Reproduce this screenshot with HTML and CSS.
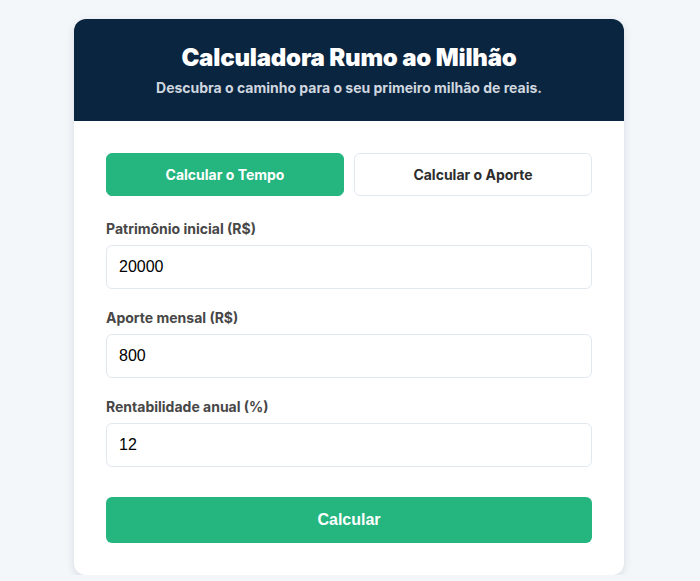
FILE: index.html
```html
<!DOCTYPE html>
<html lang="pt-BR">
<head>
<meta charset="utf-8">
<title>Calculadora Rumo ao Milhão</title>
<link rel="stylesheet" href="styles.css">
</head>
<body>
<div class="card">
  <header class="card-header">
    <h1 class="title">Calculadora Rumo ao Milhão</h1>
    <p class="subtitle">Descubra o caminho para o seu primeiro milhão de reais.</p>
  </header>
  <div class="card-body">
    <div class="tabs">
      <button class="tab tab-active">Calcular o Tempo</button>
      <button class="tab">Calcular o Aporte</button>
    </div>
    <div class="field">
      <label class="label">Patrimônio inicial (R$)</label>
      <input class="input" type="text" value="20000">
    </div>
    <div class="field">
      <label class="label">Aporte mensal (R$)</label>
      <input class="input" type="text" value="800">
    </div>
    <div class="field">
      <label class="label">Rentabilidade anual (%)</label>
      <input class="input" type="text" value="12">
    </div>
    <button class="submit">Calcular</button>
  </div>
</div>
</body>
</html>
```

FILE: styles.css
```css
* { box-sizing: border-box; }
html, body { margin: 0; padding: 0; }
body {
  background: #f4f7fa;
  font-family: Inter, "Noto Sans", sans-serif;
  padding: 19px 2px 0 0;
}
.card {
  width: 550px;
  margin: 0 auto;
  background: #ffffff;
  border-radius: 12px;
  overflow: hidden;
  box-shadow: 0 3px 10px rgba(15, 30, 60, 0.12);
}
.card-header {
  background: #0a2540;
  height: 102px;
  text-align: center;
  padding-top: 24px;
}
.title {
  margin: 0;
  color: #ffffff;
  font-size: 24px;
  font-weight: 900;
  line-height: 29px;
  letter-spacing: -0.2px;
}
.subtitle {
  margin: 7px 0 0;
  color: #cfd6df;
  font-size: 14px;
  font-weight: 700;
  line-height: 18px;
}
.card-body {
  padding: 32px 32px 32px;
}
.tabs {
  display: grid;
  grid-template-columns: 1fr 1fr;
  gap: 10px;
  margin-bottom: 24px;
}
.tab {
  height: 43px;
  border: 1px solid #e2e8f0;
  border-radius: 6px;
  background: #ffffff;
  color: #2d2d2d;
  font-family: Inter, "Noto Sans", sans-serif;
  font-size: 14px;
  font-weight: 700;
}
.tab-active {
  background: #25b57f;
  border-color: #25b57f;
  color: #ffffff;
}
.field {
  margin-bottom: 20px;
}
.label {
  display: block;
  color: #474747;
  font-size: 14px;
  font-weight: 700;
  line-height: 18px;
  margin-bottom: 7px;
}
.input {
  display: block;
  width: 100%;
  height: 44px;
  border: 1px solid #e2e8f0;
  border-radius: 6px;
  padding: 0 12px;
  font-family: "Liberation Sans", Arial, sans-serif;
  font-size: 16px;
  color: #000000;
  background: #ffffff;
}
.submit {
  display: block;
  width: 100%;
  height: 46px;
  margin-top: 30px;
  border: none;
  border-radius: 6px;
  background: #25b57f;
  color: #ffffff;
  font-family: "Liberation Sans", Arial, sans-serif;
  font-size: 16px;
  font-weight: 700;
}
```
